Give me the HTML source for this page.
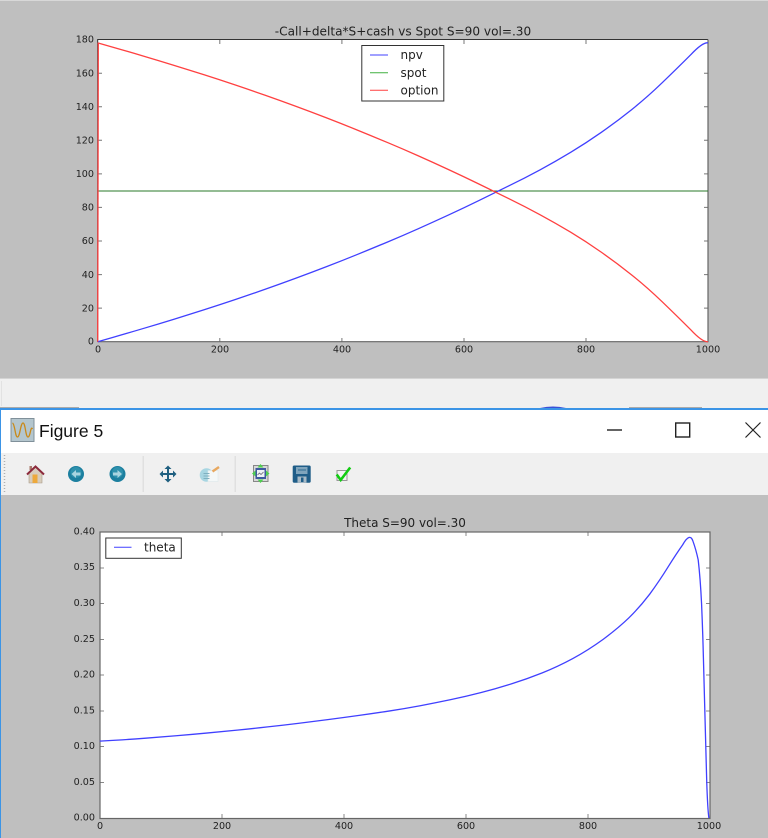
<!DOCTYPE html>
<html><head><meta charset="utf-8"><style>
html,body{margin:0;padding:0;background:#bfbfbf;width:768px;height:838px;overflow:hidden}
svg{display:block;position:absolute;left:0;top:0;filter:blur(.3px)}
text{font-family:"DejaVu Sans",sans-serif;font-size:9.6px;fill:#222}
.b{vector-effect:non-scaling-stroke;fill:none;stroke-width:1.3}
</style></head><body>
<svg width="768" height="838" viewBox="0 0 768 838" xmlns="http://www.w3.org/2000/svg">
<rect width="768" height="838" fill="#bfbfbf"/>
<rect width="768" height="1" fill="#d8d8d8"/>
<!-- top plot -->
<rect x="97.7" y="39.7" width="610.3" height="302" fill="#fff"/>
<g stroke="#777" stroke-width="1" fill="none">
<path d="M219.8 342v-4M341.9 342v-4M464 342v-4M586 342v-4M219.8 40v4M341.9 40v4M464 40v4M586 40v4"/>
<path d="M98 308.1h4M98 274.6h4M98 241h4M98 207.4h4M98 173.9h4M98 140.3h4M98 106.7h4M98 73.2h4M708 308.1h-4M708 274.6h-4M708 241h-4M708 207.4h-4M708 173.9h-4M708 140.3h-4M708 106.7h-4M708 73.2h-4"/>
</g>
<path d="M97.7 342V39.5H708" fill="none" stroke="#333" stroke-width="1"/>
<path d="M708 39.500V341.700H97.700" fill="none" stroke="#666" stroke-width="1.200"/>
<path d="M97.700 191H708" stroke="#2a7a2a" stroke-width="1" fill="none"/>
<g transform="translate(97.700,341.700) scale(.6103,-1.679)">
<path class="b" stroke="#4040ff" d="M0,0L25,2.600Q50,5.200 75,7.900Q100,10.600 125,13.400Q150,16.200 175,19.100Q200,22 225,25.050Q250,28.100 275,31.300Q300,34.500 325,37.850Q350,41.200 375,44.700Q400,48.200 425,51.900Q450,55.600 475,59.400Q500,63.200 525,67.250Q550,71.300 575,75.500Q600,79.700 625,84.150Q650,88.600 675,93.050Q700,97.500 725,102.400Q750,107.300 775,112.800Q800,118.300 825,124.650Q850,131 875,138.250Q900,145.500 925,154.250Q950,163 972,171Q991,178.400 1000,178"/>
<g transform="translate(0,178) scale(1,-1)">
<path class="b" stroke="#ff4040" d="M0,0L25,2.600Q50,5.200 75,7.900Q100,10.600 125,13.400Q150,16.200 175,19.100Q200,22 225,25.050Q250,28.100 275,31.300Q300,34.500 325,37.850Q350,41.200 375,44.700Q400,48.200 425,51.900Q450,55.600 475,59.400Q500,63.200 525,67.250Q550,71.300 575,75.500Q600,79.700 625,84.150Q650,88.600 675,93.050Q700,97.500 725,102.400Q750,107.300 775,112.800Q800,118.300 825,124.650Q850,131 875,138.250Q900,145.500 925,154.250Q950,163 972,171Q991,178.400 1000,178"/>
</g>
<path class="b" stroke="#ff4040" d="M0,0L1,178"/>
</g>
<text x="403" y="35.500" text-anchor="middle" style="font-size:12.100px">-Call+delta*S+cash vs Spot S=90 vol=.30</text>
<g text-anchor="end">
<text x="94" y="42.500">180</text><text x="94" y="76.500">160</text><text x="94" y="110">140</text><text x="94" y="143.500">120</text><text x="94" y="177">100</text><text x="94" y="210.500">80</text><text x="94" y="244">60</text><text x="94" y="278">40</text><text x="94" y="311.500">20</text><text x="94" y="344.500">0</text>
</g>
<g text-anchor="middle">
<text x="98" y="352.500">0</text><text x="220" y="352.500">200</text><text x="342" y="352.500">400</text><text x="464" y="352.500">600</text><text x="586" y="352.500">800</text><text x="708" y="352.500">1000</text>
</g>
<!-- legend top -->
<rect x="361.800" y="45.500" width="82" height="55.500" fill="#fff" stroke="#333" stroke-width="1"/>
<path d="M370 55h18" stroke="#4040ff"/><path d="M370 72.700h18" stroke="#40b040"/><path d="M370 90.200h18" stroke="#ff4040"/>
<text x="400.500" y="59" style="font-size:12px">npv</text><text x="400.500" y="76.800" style="font-size:12px">spot</text><text x="400.500" y="94.500" style="font-size:12px">option</text>
<!-- band -->
<rect x="0" y="379" width="768" height="29" fill="#f0f0f0"/>
<rect x="0" y="378" width="768" height="1" fill="#d4d4d4"/>
<rect x="1" y="381" width="1" height="25" fill="#e2e2e2"/>
<path d="M0 407.500h79M629 407.500h73" stroke="#aaa" stroke-width="1"/>
<path d="M540 408q13-3 26 0z" fill="#3a50d8"/>
<!-- window -->
<rect x="0" y="408" width="768" height="2" fill="#3b94e6"/>
<rect x="0" y="410" width="768" height="43" fill="#fff"/>
<rect x="0" y="453" width="768" height="42" fill="#f0f0f0"/>
<rect x="0" y="408" width="1" height="430" fill="#3b94e6"/>
<!-- window icon -->
<rect x="11" y="418.500" width="23" height="23" fill="#b4c6ce" stroke="#80909a" stroke-width="1"/>
<path d="M12.500 423C15 424 15 437 17.500 437S20.500 423 23 423 25.500 437 28 437 30.500 425 32.500 429" fill="none" stroke="#c98a1a" stroke-width="1.300"/>
<text x="39" y="437" style="font-family:'Liberation Sans',sans-serif;font-size:17.500px;fill:#111">Figure 5</text>
<!-- window controls -->
<path d="M607 430h15" stroke="#222" stroke-width="1.400"/>
<rect x="675.700" y="423" width="14" height="14" fill="none" stroke="#222" stroke-width="1.400"/>
<path d="M745.500 422.500l15 15M760.500 422.500l-15 15" stroke="#222" stroke-width="1.200" fill="none"/>
<!-- toolbar -->
<path d="M4.500 455v38" stroke="#b0b0b0" stroke-width="1.500" stroke-dasharray="1 2"/>
<rect x="142.500" y="456" width="1.500" height="36" fill="#e0e0e0"/>
<rect x="234.500" y="456" width="1.500" height="36" fill="#e0e0e0"/>
<!-- home -->
<path d="M29 473v10h13v-10l-6.500-6z" fill="#d8cdbc" stroke="#a89a88" stroke-width=".6"/>
<rect x="32.500" y="474.500" width="5" height="8.500" fill="#eda93c"/>
<rect x="29.500" y="466" width="2.500" height="4" fill="#a8786a"/>
<path d="M27 474.500l8.500-8 8.500 8" fill="none" stroke="#8c2a3c" stroke-width="2"/>
<!-- back / forward -->
<circle cx="76" cy="474" r="8" fill="#1c7f9f"/>
<circle cx="76" cy="472.500" r="5.500" fill="#3a9cb8" opacity=".6"/>
<path d="M71.500 474l4.500-4v2.500h4.500v3H76v2.500z" fill="#a8d4e0"/>
<circle cx="117.500" cy="474" r="8" fill="#1c7f9f"/>
<circle cx="117.500" cy="472.500" r="5.500" fill="#3a9cb8" opacity=".6"/>
<path d="M122 474l-4.500-4v2.500H113v3h4.500v2.500z" fill="#a8d4e0"/>
<!-- move -->
<path d="M168 467v14M161 474h14" stroke="#1f5f80" stroke-width="2" fill="none"/>
<path d="M168 465.500l-3.500 3.500h7zM168 482.500l-3.500-3.500h7zM159.500 474l3.500-3.500v7zM176.500 474l-3.500-3.500v7z" fill="#1f5f80"/>
<!-- edit -->
<circle cx="206.500" cy="475" r="6.800" fill="#a8d6e2"/>
<rect x="208" y="470.500" width="10" height="11" fill="#f4f8f8" stroke="#dde8ea" stroke-width=".6"/>
<path d="M203.500 473.500h6M203.500 476h6M203.500 478.500h6" stroke="#7fb0c0" stroke-width="1"/>
<path d="M212.500 471.500l6.500-4.500" stroke="#e8a860" stroke-width="2.400"/>
<!-- subplots -->
<rect x="253.500" y="465.500" width="14.500" height="16" fill="#d8d8d8" stroke="#888" stroke-width="1"/>
<rect x="255.500" y="468" width="10.500" height="11" fill="#3f5aa0"/>
<rect x="257" y="470" width="7.500" height="7" fill="#eef2f6"/>
<path d="M257.500 475l2-2 1.500 1.500 2.500-2.500" stroke="#556" stroke-width=".7" fill="none"/>
<path d="M260.500 464l-3 3.500h6zM260.500 483l-3-3.500h6zM252 473.500l3.500-3v6zM269.500 473.500l-3.500-3v6z" fill="#4fd04f"/>
<!-- save -->
<rect x="292.700" y="465.500" width="18" height="17.300" rx="1.500" fill="#1f5d88"/>
<rect x="296" y="467" width="11.500" height="7" fill="#7fa4bc"/>
<path d="M298 470h8" stroke="#2e6a90" stroke-width="1"/>
<rect x="297.500" y="476.500" width="9" height="6.300" fill="#a8bac6"/>
<rect x="301" y="477.500" width="2.500" height="4.500" fill="#1f5d88"/>
<!-- check -->
<rect x="337" y="470.500" width="10" height="10" fill="#f4f4f4" stroke="#999" stroke-width="1"/>
<path d="M336.700 474.500l4 5.500 9.500-12.500" fill="none" stroke="#12cc12" stroke-width="2.600"/>
<!-- theta plot -->
<rect x="100" y="532" width="610" height="286.500" fill="#fff"/>
<g stroke="#888" stroke-width="1" fill="none">
<path d="M222 818v-4M344 818v-4M466 818v-4M588 818v-4M222 532v4M344 532v4M466 532v4M588 532v4"/>
<path d="M100 782.500h4M100 746.500h4M100 711h4M100 675h4M100 639.500h4M100 603.500h4M100 568h4M710 782.500h-4M710 746.500h-4M710 711h-4M710 675h-4M710 639.500h-4M710 603.500h-4M710 568h-4"/>
</g>
<rect x="100" y="532" width="610" height="286.500" fill="none" stroke="#666" stroke-width="1.200"/>
<g transform="translate(99.800,818) scale(.6103,-.715)">
<path class="b" stroke="#4040ff" d="M0,107.500L25,108.750Q50,110 75,111.600Q100,113.300 125,115Q150,116.800 175,118.800Q200,120.800 225,122.900Q250,125 275,127.400Q300,129.800 325,132.400Q350,135 375,137.750Q400,140.500 425,143.500Q450,146.500 475,149.750Q500,153 525,157Q550,161 575,165.500Q600,170 625,175.500Q650,181 675,187.750Q700,194.500 725,203Q750,211.500 775,223Q800,234.500 825,250Q850,266 867,280Q885,295 901,313Q918,333 931,351Q945,370 955,382Q967,400 972,387Q977,375 980.500,361Q984,335 986,300Q988,260 989,225Q992.500,120 994.500,50Q996,12 998,0"/>
</g>
<text x="405" y="527" text-anchor="middle" style="font-size:12px">Theta S=90 vol=.30</text>
<g text-anchor="end">
<text x="95" y="534.500">0.40</text><text x="95" y="570">0.35</text><text x="95" y="606">0.30</text><text x="95" y="642">0.25</text><text x="95" y="677.500">0.20</text><text x="95" y="713.500">0.15</text><text x="95" y="749">0.10</text><text x="95" y="785">0.05</text><text x="95" y="820.500">0.00</text>
</g>
<g text-anchor="middle">
<text x="100" y="829">0</text><text x="222" y="829">200</text><text x="344" y="829">400</text><text x="466" y="829">600</text><text x="588" y="829">800</text><text x="709" y="829">1000</text>
</g>
<rect x="105.800" y="538" width="75.500" height="20.300" fill="#fff" stroke="#333" stroke-width="1"/>
<path d="M114 547.300h17.500" stroke="#4040ff"/>
<text x="144" y="551.500" style="font-size:12px">theta</text>
</svg>
</body></html>
